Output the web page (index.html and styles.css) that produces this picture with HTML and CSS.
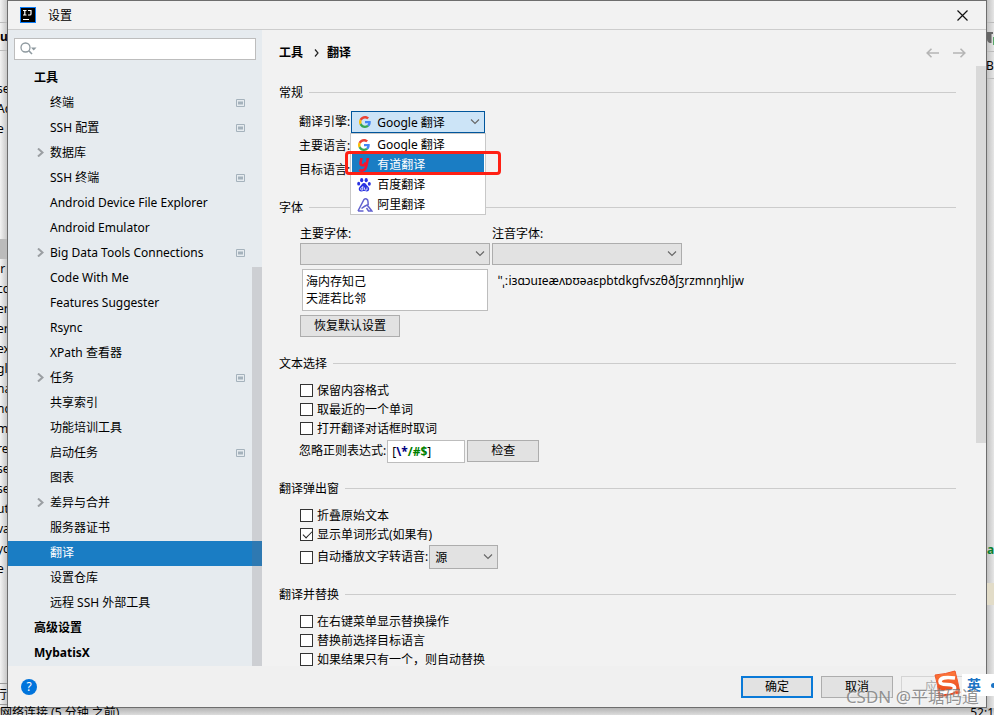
FILE: index.html
```html
<!DOCTYPE html>
<html lang="zh-CN">
<head>
  <meta charset="UTF-8">
  <meta name="viewport" content="width=device-width, initial-scale=1.0">
  <title>设置</title>
  <link rel="stylesheet" href="styles.css">
</head>
<body>
  <svg class="defs" width="0" height="0" aria-hidden="true">
    <symbol id="chevron" viewBox="0 0 10 6"><path d="M1 0.5 L5 4.5 L9 0.5" fill="none" stroke="#666" stroke-width="1.1"/></symbol>
    <symbol id="expand" viewBox="0 0 7 9"><path d="M1 0.5 L5.5 4.5 L1 8.5" fill="none" stroke="#9a9ea2" stroke-width="2"/></symbol>
    <symbol id="project" viewBox="0 0 9 8"><path d="M0.5 0.5 H8.5 V7.5 H0.5 Z" fill="none" stroke="#a5b2bc"/><path d="M2 2.5 H7 V5.5 H2 Z" fill="#a5b2bc"/></symbol>
    <symbol id="google" viewBox="0 0 48 48">
      <path fill="#ea4335" d="M24 9.5c3.5 0 6.700 1.200 9.200 3.600l6.900-6.900C35.900 2.400 30.500 0 24 0 14.600 0 6.500 5.400 2.600 13.200l8 6.200C12.400 13.700 17.700 9.500 24 9.500z"/>
      <path fill="#4285f4" d="M47 24.500c0-1.600-.2-3.100-.4-4.500H24v9h12.900c-.6 3-2.300 5.500-4.800 7.200l7.700 6C44.400 38 47 31.800 47 24.500z"/>
      <path fill="#fbbc05" d="M10.500 28.600c-.5-1.500-.8-3-.8-4.600s.3-3.100.8-4.600l-8-6.200C.9 16.500 0 20.100 0 24s.9 7.500 2.600 10.800z"/>
      <path fill="#34a853" d="M24 48c6.500 0 11.900-2.100 15.900-5.800l-7.700-6c-2.200 1.500-4.900 2.300-8.200 2.300-6.300 0-11.600-4.200-13.500-9.900l-8 6.200C6.500 42.600 14.600 48 24 48z"/>
    </symbol>
  </svg>

  <div class="desktop">
    <div class="editor-left" aria-hidden="true">
      <p class="tab">u</p>
      <ul class="lines">
        <li>se</li><li>Ac</li><li>e</li><li></li><li></li><li></li><li></li><li></li><li class="current"></li>
        <li>.r</li><li>cc</li><li>er</li><li>er</li><li>ex</li><li>gl</li><li>na</li><li>nc</li><li>m</li>
        <li>re</li><li>se</li><li>se</li><li>ut</li><li>va</li><li>yc</li><li>e</li>
      </ul>
      <p class="run-tab">行</p>
    </div>

    <main class="dialog">
      <header class="titlebar">
        <svg class="app-logo" width="16" height="16" viewBox="0 0 16 16">
          <rect width="16" height="16" fill="#087cfa"/>
          <rect x="1" y="1" width="14" height="14" fill="#000"/>
          <path d="M3 3.500 H6.500 M4.800 3.500 V8 M3 8 H6.500 M8 3.500 H11 V7 Q11 8 9.800 8 H8 M3 12.500 H9" fill="none" stroke="#fff" stroke-width="1.200"/>
        </svg>
        <h1>设置</h1>
        <button class="close" aria-label="关闭">
          <svg width="11" height="11" viewBox="0 0 11 11"><path d="M0.500 0.500 L10.500 10.500 M10.500 0.500 L0.500 10.500" stroke="#111" stroke-width="1.200"/></svg>
        </button>
      </header>

      <div class="workspace">
        <nav class="sidebar">
          <label class="search">
            <svg width="18" height="14" viewBox="0 0 18 14"><circle cx="5.500" cy="5.500" r="4.500" fill="none" stroke="#8e999f" stroke-width="1.300"/><path d="M8.800 8.800 L12 12" stroke="#8e999f" stroke-width="1.600"/><path d="M11 5.500 H16.500 L13.700 8.500 Z" fill="#8e999f"/></svg>
            <input type="text" aria-label="搜索">
          </label>
          <ul class="tree">
            <li class="group"><a href="#">工具</a></li>
            <li><a href="#">终端</a><svg class="mark"><use href="#project"/></svg></li>
            <li><a href="#">SSH 配置</a><svg class="mark"><use href="#project"/></svg></li>
            <li><svg class="arrow"><use href="#expand"/></svg><a href="#">数据库</a></li>
            <li><a href="#">SSH 终端</a><svg class="mark"><use href="#project"/></svg></li>
            <li><a href="#">Android Device File Explorer</a></li>
            <li><a href="#">Android Emulator</a></li>
            <li><svg class="arrow"><use href="#expand"/></svg><a href="#">Big Data Tools Connections</a><svg class="mark"><use href="#project"/></svg></li>
            <li><a href="#">Code With Me</a></li>
            <li><a href="#">Features Suggester</a></li>
            <li><a href="#">Rsync</a></li>
            <li><a href="#">XPath 查看器</a></li>
            <li><svg class="arrow"><use href="#expand"/></svg><a href="#">任务</a><svg class="mark"><use href="#project"/></svg></li>
            <li><a href="#">共享索引</a></li>
            <li><a href="#">功能培训工具</a></li>
            <li><a href="#">启动任务</a><svg class="mark"><use href="#project"/></svg></li>
            <li><a href="#">图表</a></li>
            <li><svg class="arrow"><use href="#expand"/></svg><a href="#">差异与合并</a></li>
            <li><a href="#">服务器证书</a></li>
            <li class="selected"><a href="#">翻译</a></li>
            <li><a href="#">设置仓库</a></li>
            <li><a href="#">远程 SSH 外部工具</a></li>
            <li class="group"><a href="#">高级设置</a></li>
            <li class="group"><a href="#">MybatisX</a></li>
          </ul>
          <div class="tree-scroll"></div>
        </nav>

        <div class="page">
          <div class="page-head">
            <h2>工具</h2>
            <svg width="5" height="8" viewBox="0 0 5 8"><path d="M1 0.500 L4 4 L1 7.500" fill="none" stroke="#222" stroke-width="1.200"/></svg>
            <h2>翻译</h2>
            <div class="history">
              <button aria-label="后退"><svg width="13" height="10" viewBox="0 0 13 10"><path d="M13 5 H1.500 M5.500 0.700 L1.200 5 L5.500 9.300" fill="none" stroke="#b5b5b5" stroke-width="1.600"/></svg></button>
              <button aria-label="前进"><svg width="13" height="10" viewBox="0 0 13 10"><path d="M0 5 H11.500 M7.500 0.700 L11.800 5 L7.500 9.300" fill="none" stroke="#b5b5b5" stroke-width="1.600"/></svg></button>
            </div>
          </div>

          <section>
            <h3>常规</h3>
            <div class="fields">
              <div class="row">
                <label for="engine">翻译引擎:</label>
                <div class="combo engine">
                  <svg class="combo-icon" width="12" height="12"><use href="#google"/></svg>
                  <select id="engine"><option>Google 翻译</option></select>
                  <svg class="chevron"><use href="#chevron"/></svg>
                  <ul class="popup" role="listbox" aria-label="翻译引擎">
                    <li role="option"><svg width="14" height="14" viewBox="-1 -1 14 14"><use href="#google" width="12" height="12"/></svg>Google 翻译</li>
                    <li role="option" class="active" aria-selected="true">
                      <svg width="14" height="14" viewBox="0 0 14 14"><path d="M4.500 0 L3.600 4.500 Q3.200 7.300 5.500 7.300 Q8 7.300 9 4.500 M11 0 L9.300 8 Q8.300 12.600 4.800 12.600 Q3.300 12.600 2.300 11.800" fill="none" stroke="#f5142d" stroke-width="2.600"/></svg>有道翻译</li>
                    <li role="option">
                      <svg width="14" height="14" viewBox="0 0 14 14" fill="#2932e1"><ellipse cx="4.700" cy="2.200" rx="1.600" ry="2.100"/><ellipse cx="9.200" cy="2.200" rx="1.600" ry="2.100"/><ellipse cx="1.700" cy="5.700" rx="1.500" ry="1.900"/><ellipse cx="12.300" cy="5.800" rx="1.500" ry="1.900"/><path d="M7 5 C9 5 9.300 7 11 8.500 C13 10.200 12.500 13.500 9.800 13.500 C8 13.500 8 13.100 7 13.100 S5.800 13.500 4.200 13.500 C1.500 13.500 1 10.200 3 8.500 C4.700 7 5 5 7 5 Z"/><path d="M5.800 8 V12 H4.500 Q3.600 12 3.600 11 T4.500 9.700 H5.800 M7.500 9.500 V11.200 Q7.500 12 8.300 12 H10 V9.500" fill="none" stroke="#fff" stroke-width=".8"/></svg>百度翻译</li>
                    <li role="option">
                      <svg width="16" height="14" viewBox="0 0 16 14"><path d="M1 13 L7 1.500 Q8 0.500 9.500 1 Q11 1.700 11 3.500 L11.200 7 M1 13 H6.500 M4.500 10.500 Q8 7.800 10.200 7 L14.800 13 H11.500 L9.500 10" fill="none" stroke="#6262cf" stroke-width="1.500"/></svg>阿里翻译</li>
                  </ul>
                  <div class="callout"></div>
                </div>
              </div>
              <div class="row">主要语言:</div>
              <div class="row">目标语言:</div>
            </div>
          </section>

          <section>
            <h3>字体</h3>
            <div class="fields fonts">
              <label for="mainFont">主要字体:</label>
              <label for="phoneticFont">注音字体:</label>
              <div class="combo"><select id="mainFont"></select><svg class="chevron"><use href="#chevron"/></svg></div>
              <div class="combo"><select id="phoneticFont"></select><svg class="chevron"><use href="#chevron"/></svg></div>
              <textarea aria-label="预览" rows="2">海内存知己
天涯若比邻</textarea>
              <p class="phonetic">ˈ'ˌːiɜɑɔuɪeæʌɒʊəaɛpbtdkgfvszθðʃʒrzmnŋhljw</p>
              <button class="btn restore">恢复默认设置</button>
            </div>
          </section>

          <section>
            <h3>文本选择</h3>
            <div class="fields">
              <label class="check"><input type="checkbox">保留内容格式</label>
              <label class="check"><input type="checkbox">取最近的一个单词</label>
              <label class="check"><input type="checkbox">打开翻译对话框时取词</label>
              <div class="row">
                <span id="ignoreLabel">忽略正则表达式:</span>
                <div class="regex" role="textbox" contenteditable="true" spellcheck="false" aria-labelledby="ignoreLabel">[<b class="esc">\*</b><b>/#$</b>]</div>
                <button class="btn">检查</button>
              </div>
            </div>
          </section>

          <section>
            <h3>翻译弹出窗</h3>
            <div class="fields">
              <label class="check"><input type="checkbox">折叠原始文本</label>
              <label class="check"><input type="checkbox" checked>显示单词形式(如果有)</label>
              <div class="row">
                <label class="check"><input type="checkbox">自动播放文字转语音:</label>
                <div class="combo source"><select aria-label="语音来源"><option>源</option></select><svg class="chevron"><use href="#chevron"/></svg></div>
              </div>
            </div>
          </section>

          <section>
            <h3>翻译并替换</h3>
            <div class="fields">
              <label class="check"><input type="checkbox">在右键菜单显示替换操作</label>
              <label class="check"><input type="checkbox">替换前选择目标语言</label>
              <label class="check"><input type="checkbox">如果结果只有一个，则自动替换</label>
            </div>
          </section>
        </div>
        <div class="page-scroll"></div>
      </div>

      <footer class="actions">
        <button class="help" aria-label="帮助">?</button>
        <button class="btn primary">确定</button>
        <button class="btn">取消</button>
        <button class="btn" disabled>应用</button>
      </footer>
    </main>

    <div class="editor-right" aria-hidden="true">
      <div class="tool"><svg width="7" height="14" viewBox="0 0 7 14"><path d="M0 1 H6 V3 H4.500 V12 H3 Q0 11 0 8 Z" fill="#666"/><path d="M6 6 H7 V14 H6 Z" fill="#59a869"/></svg></div>
      <p class="crumb">B</p>
      <p class="code">a</p>
      <div class="caret-row"></div>
    </div>

    <div class="statusbar"><span>网络连接 (5 分钟 之前)</span><span>52:1</span></div>
  </div>

  <div class="ime">
    <svg width="30" height="30" viewBox="0 0 30 30"><defs><linearGradient id="sogou" x1="0" y1="0" x2="0" y2="1"><stop offset="0" stop-color="#ff7a3c"/><stop offset="1" stop-color="#e23d12"/></linearGradient></defs><path d="M3 5 Q14 4 23 1 Q26 12 28 23 Q17 24 7 28 Q6 14 3 5 Z" fill="url(#sogou)" stroke="#f0562a" stroke-linejoin="round"/><path d="M23 8 Q8 6 8 11.500 Q8 14.500 15 14.500 Q23 14.500 22.500 18.500 Q21.500 23 8 22" fill="none" stroke="#fff" stroke-width="3.600"/></svg>
    <span class="ime-mode">英 <i></i></span>
  </div>
  <div class="watermark">CSDN @平塘码道</div>
</body>
</html>
```

FILE: styles.css
```css
* { box-sizing: border-box; }

body {
  margin: 0;
  height: 100vh;
  overflow: hidden;
  position: relative;
  font-family: "Noto Sans", "Noto Sans CJK SC", sans-serif;
  font-size: 12px;
  line-height: 18px;
  color: #000;
}

h1, h2, h3, p, ul { margin: 0; padding: 0; }
h1, h3 { font-size: 12px; font-weight: normal; }
h2 { font-size: 12px; font-weight: 600; }
ul { list-style: none; }
a { color: inherit; text-decoration: none; }
button, select, input, textarea { font: inherit; color: inherit; }
button { padding: 0; border: 0; background: none; }
svg { display: block; flex: none; }
.defs { position: absolute; }

/* editor window behind the dialog */
.desktop {
  display: grid;
  grid-template-columns: 7px minmax(0, 1fr) 7px;
  grid-template-rows: minmax(0, 1fr) 7px;
  height: 100vh;
  background: #d6d6d6;
}
.editor-left, .editor-right { overflow: hidden; background: #e2e2e2; white-space: nowrap; }
.editor-left { background: linear-gradient(to right, #f3f3f3, #c8c8c8); }
.tab {
  height: 29px;
  margin-top: 22px;
  padding-top: 5px;
  border: solid #bbb;
  border-width: 1px 0;
  font-weight: bold;
}
.lines { margin-top: 28px; height: 604px; }
.lines li { height: 20px; line-height: 20px; text-indent: -3px; }
.lines .current { background: #bbb; }
.run-tab { border: solid #999; border-width: 1px 0; height: 22px; line-height: 22px; text-indent: -5px; }
.editor-right { background: linear-gradient(to right, #c2c2c2, #e6e6e6); }
.tool { height: 30px; margin-top: 22px; padding-top: 8px; border: solid #bbb; border-width: 1px 0; }
.crumb { height: 27px; line-height: 27px; border-bottom: 1px solid #bbb; text-indent: -1px; }
.code { margin-top: 462px; height: 20px; color: #0a8030; font-weight: bold; }
.caret-row { height: 22px; margin-top: 22px; background: #e2dcc8; }
.statusbar {
  grid-column: 1 / -1;
  display: flex;
  justify-content: space-between;
  line-height: 10px;
  background: linear-gradient(#b5b5b5, #dcdcdc);
}

/* dialog */
.dialog {
  display: flex;
  flex-direction: column;
  border: 1px solid #6e6e6e;
  background: #f2f2f2;
  min-height: 0;
}
.titlebar {
  display: flex;
  align-items: center;
  height: 29px;
  padding: 0 18px 0 12px;
  border-bottom: 1px solid #cdcdcd;
}
.titlebar h1 { margin-left: 12px; padding-top: 2px; }
.close { margin-left: auto; }
.workspace { flex: 1; display: flex; min-height: 0; }

.sidebar { position: relative; width: 254px; padding-top: 8px; background: #e6ebef; }
.search {
  display: flex;
  align-items: center;
  height: 22px;
  margin: 0 6px 6px;
  padding-left: 5px;
  border: 1px solid #bdbdbd;
  background: #fff;
}
.search input { flex: 1; min-width: 0; border: 0; outline: 0; background: none; }
.tree li {
  display: flex;
  align-items: center;
  height: 25px;
  padding: 0 17px 2px 42px;
}
.tree .group { padding-left: 26px; font-weight: bold; }
.tree .selected { background: #1a7dc4; color: #fff; }
.arrow { width: 7px; height: 9px; margin: 0 6px 0 -13px; }
.mark { width: 9px; height: 8px; margin-left: auto; }
.tree-scroll {
  position: absolute;
  right: 0;
  bottom: 0;
  width: 10px;
  height: 399px;
  background: rgba(120, 110, 115, .22);
}

.page { flex: 1; min-width: 0; overflow: hidden; padding: 14px 20px 0 17px; }
.page-scroll { width: 10px; height: 377px; margin-top: 36px; background: #d9d9d9; }
.page-head { display: flex; align-items: center; height: 18px; margin-bottom: 22px; }
.page-head > svg { margin: 0 8px 0 11px; }
.history { display: flex; gap: 14px; margin-left: auto; margin-right: -10px; }

section { margin-bottom: 17px; }
h3 { display: flex; align-items: center; gap: 6px; height: 18px; margin-bottom: 8px; }
h3::after { content: ""; flex: 1; height: 1px; margin-bottom: 2px; background: #ccc; }
.fields { padding-left: 20px; }
.row { display: flex; align-items: center; height: 24px; gap: 1px; }
.check + .row { height: 26px; margin-bottom: -1px; }
.row .btn { margin-left: 1px; }

.combo { position: relative; height: 22px; }
.combo select {
  appearance: none;
  display: block;
  width: 100%;
  height: 100%;
  padding: 1px 20px 0 5px;
  border: 1px solid #adadad;
  border-radius: 0;
  outline: 0;
  background: #e2e2e2;
}
.chevron { position: absolute; right: 5px; top: 8px; width: 10px; height: 6px; pointer-events: none; }
.engine { width: 134px; }
.combo.engine select { padding-left: 25px; border-color: #00569c; background: #cce4f7; }
.combo-icon { position: absolute; left: 8px; top: 5px; }
.source { width: 69px; height: 24px; }
.source .chevron { top: 9px; }

.popup {
  position: absolute;
  z-index: 1;
  top: 22px;
  left: -1px;
  right: -1px;
  border: 1px solid #c8c8c8;
  background: #fff;
}
.popup li { display: flex; align-items: center; height: 20px; margin: 0 1px; padding: 2px 0 0 5px; }
.popup svg { margin-right: 6px; }
.popup svg[width="16"] { margin-right: 4px; }
.popup .active { background: #1a7dc4; color: #fff; }
/* red frame round the highlighted entry */
.callout {
  position: absolute;
  z-index: 2;
  top: 40px;
  left: -6px;
  width: 156px;
  height: 24px;
  border: 3px solid #ff2014;
  border-radius: 4px;
}

.fonts {
  display: grid;
  grid-template-columns: 190px 190px;
  column-gap: 2px;
  padding: 0 0 1px 21px;
}
textarea {
  display: block;
  width: 186px;
  height: 42px;
  margin: 4px 2px;
  padding: 3px;
  border: 1px solid #bdbdbd;
  border-radius: 0;
  outline: 0;
  line-height: 17px;
  resize: none;
  overflow: hidden;
  background: #fff;
}
.phonetic { padding: 7px 6px; white-space: nowrap; }

.btn { width: 72px; height: 22px; border: 1px solid #adadad; background: #e2e2e2; }
.btn.restore { width: 100px; }
.btn.primary { border: 2px solid #0a7ad8; }
.btn:disabled { border-color: #d4d4d4; background: #f0f0f0; color: #a8a8a8; }

.check { display: flex; align-items: center; height: 19px; padding-left: 1px; }
.check input {
  appearance: none;
  width: 13px;
  height: 13px;
  margin: 0 4px 0 0;
  border: 1px solid #333;
  background: #fff;
}
.check input:checked::after {
  content: "";
  display: block;
  width: 8px;
  height: 4px;
  margin: 2px;
  border: solid #222;
  border-width: 0 0 1px 1px;
  transform: rotate(-45deg);
}
.regex { width: 78px; height: 23px; padding: 2px 4px; border: 1px solid #bdbdbd; background: #fff; outline: 0; }
.regex b { color: #008000; }
.regex .esc { color: #000080; }

.actions { display: flex; align-items: center; gap: 8px; height: 41px; padding: 0 13px; background: #f0f0f0; }
.help {
  width: 16px;
  height: 16px;
  margin-right: auto;
  border-radius: 50%;
  background: #0074dc;
  color: #fff;
  line-height: 16px;
}

/* floating over the desktop */
.ime { position: absolute; right: 0; bottom: 15px; display: flex; align-items: center; }
.ime-mode {
  display: flex;
  align-items: center;
  justify-content: space-between;
  width: 32px;
  height: 22px;
  padding-left: 5px;
  background: #fff;
  color: #1b74c5;
  font-size: 14px;
  font-weight: bold;
}
.ime-mode i { width: 3px; height: 5px; border-radius: 3px 0 0 3px; background: #1b74c5; }
.watermark {
  position: absolute;
  right: 15px;
  bottom: 6px;
  color: rgba(120, 120, 120, .8);
  font-size: 17px;
  line-height: 24px;
  text-shadow: 1px 1px 1px rgba(255, 255, 255, .6);
}
```
